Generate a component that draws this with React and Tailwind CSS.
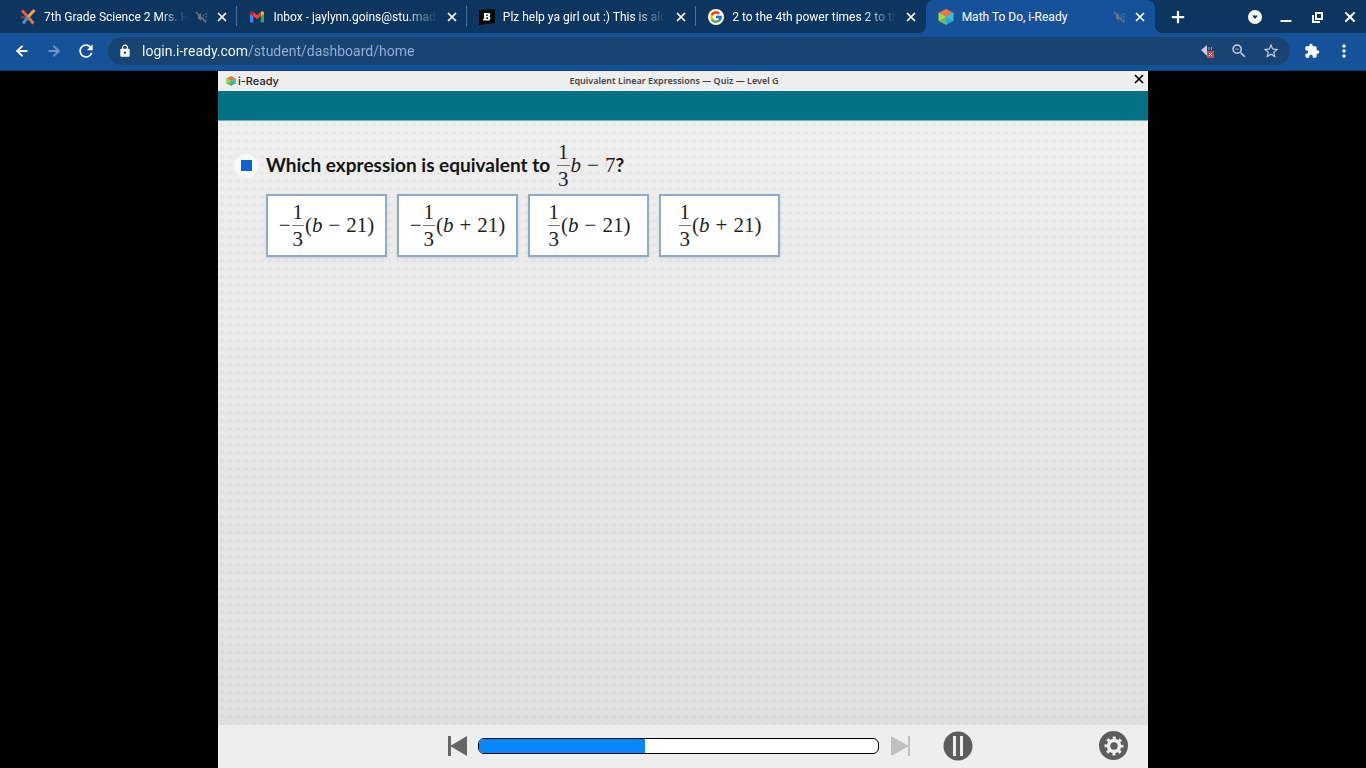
import { ArrowLeft, ArrowRight, Minus, Plus, X } from 'lucide-react'
import {
  MdExtension,
  MdLock,
  MdMoreVert,
  MdOutlineZoomOut,
  MdRefresh,
  MdSettings,
  MdStarBorder,
} from 'react-icons/md'
import { FcGoogle } from 'react-icons/fc'

const tabs = [
  { id: 'science', title: '7th Grade Science 2 Mrs. H', icon: ScienceIcon, muted: true },
  { id: 'inbox', title: 'Inbox - jaylynn.goins@stu.mad', icon: GmailIcon },
  { id: 'help', title: 'Plz help ya girl out :) This is alo', icon: BrainlyIcon },
  { id: 'search', title: '2 to the 4th power times 2 to th', icon: GoogleIcon, last: true },
  { id: 'iready', title: 'Math To Do, i-Ready', icon: CubeIcon, muted: true, active: true },
]

const choices = [
  { negative: true, operator: '−' },
  { negative: true, operator: '+' },
  { negative: false, operator: '−' },
  { negative: false, operator: '+' },
]

const progress = 41.5

function ScienceIcon() {
  return (
    <svg className="size-4" viewBox="0 0 16 16" fill="none" strokeWidth="3">
      <path d="M2 1.5 8 8" stroke="#f0563a" />
      <path d="M8 8l5.5 6.5" stroke="#e8744a" />
      <path d="M14.5 1 8 8" stroke="#f6a13a" />
      <path d="M8 8 3 14.5" stroke="#4f8fc0" />
      <path d="M1 8.5 6 8" stroke="#a03a4c" strokeWidth="2" />
    </svg>
  )
}

function GmailIcon() {
  return (
    <svg className="size-4" viewBox="0 0 16 16">
      <path d="M1 4v8.500a1 1 0 0 0 1 1h2.300V6z" fill="#4285f4" />
      <path d="M15 4v8.500a1 1 0 0 1-1 1h-2.300V6z" fill="#34a853" />
      <path d="M1 4.500V4c0-1.500 1.700-2.200 2.800-1.300L4.300 3v4.300L1 5z" fill="#c5221f" />
      <path d="M15 4.500V4c0-1.500-1.700-2.200-2.800-1.300l-.5.3v4.300L15 5z" fill="#fbbc04" />
      <path d="M4.300 3 8 5.900 11.700 3v4.300L8 10.200 4.300 7.300z" fill="#ea4335" />
    </svg>
  )
}

function BrainlyIcon() {
  return (
    <svg className="size-4" viewBox="0 0 16 16">
      <path d="M0 1 16 0v14L0 16z" fill="#000" />
      <path
        d="M5 4h4.300c1.500 0 2 .7 2 1.700 0 .9-.5 1.500-1.200 1.800.9.200 1.300.8 1.300 1.700 0 1.500-1.100 2.300-2.700 2.300H4.200V9.800h.9V5.700H5zm2.300 1.500v1.400h.9c.6 0 .9-.3.900-.8 0-.4-.3-.6-.8-.6zm0 2.700v1.700h1c.6 0 1-.3 1-.9 0-.5-.3-.8-1-.8z"
        fill="#fff"
        fillRule="evenodd"
      />
    </svg>
  )
}

function GoogleIcon() {
  return (
    <span className="grid size-4 place-items-center rounded-full bg-white">
      <FcGoogle className="size-3.5" />
    </span>
  )
}

function CubeIcon({ className = 'size-4' }) {
  return (
    <svg className={className} viewBox="0 0 16 16">
      <path d="M8 0 15.300 3.800 8 7.800.7 3.800z" fill="#f4743b" />
      <path d="M.7 3.800 8 7.800V16L.7 12z" fill="#6cc24a" />
      <path d="M15.300 3.800 8 7.800V16l7.300-4z" fill="#28a9d6" />
      <path d="M.7 3.800 8 7.800 .7 12z" fill="#a2d94a" />
      <path d="M15.300 3.800 8 7.800l7.300 4.200z" fill="#35c4cf" />
    </svg>
  )
}

function MutedIcon() {
  return (
    <svg className="size-3 text-[#6a7480]" viewBox="0 0 12 12" fill="none" stroke="currentColor">
      <path d="M3 4.500 6 2v8L3 7.500z" fill="currentColor" stroke="none" />
      <path d="M8.500 3.500v5M11 2v8" strokeDasharray="2 1" />
      <path d="M1 1l10 10.500" strokeWidth="1.500" />
    </svg>
  )
}

function BlockedSoundIcon() {
  return (
    <svg className="size-4" viewBox="0 0 16 16">
      <path d="M1 7 7 2v11z" fill="#c3cfdf" />
      <path d="M9 4v3M11.500 4v3" stroke="#8ba1bf" />
      <rect x="7" y="8" width="7" height="7" fill="#d04a4a" />
      <path d="m9 10 3 3m0-3-3 3" stroke="#fff" />
    </svg>
  )
}

function Tab({ tab }) {
  const Icon = tab.icon
  return (
    <div
      className={`relative flex h-full min-w-0 flex-1 items-center pl-3 pr-2 ${
        tab.active ? 'rounded-t-lg bg-[#15529a]' : ''
      }`}
    >
      {tab.active && (
        <>
          <span className="absolute bottom-0 -left-2 size-2 bg-[radial-gradient(circle_at_0_0,transparent_8px,#15529a_8px)]" />
          <span className="absolute -right-2 bottom-0 size-2 bg-[radial-gradient(circle_at_100%_0,transparent_8px,#15529a_8px)]" />
        </>
      )}
      <a href="#" className="flex min-w-0 flex-1 items-center gap-2">
        <span className="shrink-0">
          <Icon />
        </span>
        <span
          className={`min-w-0 flex-1 overflow-hidden text-xs whitespace-nowrap ${
            tab.active ? '' : 'mask-r-from-80%'
          }`}
        >
          {tab.title}
        </span>
      </a>
      {tab.muted && (
        <span className="ml-2 shrink-0">
          <MutedIcon />
        </span>
      )}
      <button aria-label={`Close ${tab.title}`} className="ml-2 shrink-0">
        <X className="size-3.5" strokeWidth={3} />
      </button>
      {!tab.active && !tab.last && <span className="absolute top-1.5 right-0 h-5 w-px bg-[#4c719c]" />}
    </div>
  )
}

function Fraction() {
  return (
    <span className="mx-px inline-flex flex-col items-center leading-[26px]">
      <span className="border-b border-[#777] px-px">1</span>
      <span>3</span>
    </span>
  )
}

function Choice({ negative, operator }) {
  return (
    <button className="flex h-[63px] w-[121px] items-center justify-center border-2 border-[#8eabc9] bg-white font-['Liberation_Serif',serif] text-[21px] text-[#222] shadow">
      {negative && <span>−</span>}
      <Fraction />
      <span>(</span>
      <i>b</i>
      <span className="mx-1.5">{operator}</span>
      <span>21)</span>
    </button>
  )
}

function Browser() {
  return (
    <header className="text-white">
      {/* Tab strip */}
      <div className="flex h-[33px] bg-[#0c355f] pl-2">
        <div className="flex max-w-[1147px] flex-1">
          {tabs.map((tab) => (
            <Tab key={tab.id} tab={tab} />
          ))}
        </div>
        <button aria-label="New tab" className="ml-3.5">
          <Plus className="size-[18px]" strokeWidth={3} />
        </button>
        <div className="ml-auto flex items-center gap-4 pr-2">
          <button aria-label="Search tabs">
            <svg className="size-4" viewBox="0 0 16 16">
              <circle cx="9" cy="8" r="7" fill="#fff" />
              <path d="M6 6.500h6L9 10z" fill="#0c355f" />
            </svg>
          </button>
          <button aria-label="Minimize" className="pt-2">
            <Minus className="size-4" strokeWidth={3} />
          </button>
          <button aria-label="Restore">
            <svg className="size-4" viewBox="0 0 16 16" fill="none" stroke="currentColor" strokeWidth="2">
              <path d="M6 4h6v6H6zM3 6v7h7" />
            </svg>
          </button>
          <button aria-label="Close window">
            <X className="size-4" strokeWidth={3} />
          </button>
        </div>
      </div>

      {/* Toolbar */}
      <div className="flex h-[38px] items-center border-b border-[#0f3c72] bg-[#15529a] pr-3 pb-px pl-3.5">
        <div className="flex items-center gap-4">
          <button aria-label="Back">
            <ArrowLeft className="size-4" strokeWidth={3} />
          </button>
          <button aria-label="Forward" className="text-[#7096c4]">
            <ArrowRight className="size-4" strokeWidth={3} />
          </button>
        </div>
        <button aria-label="Reload" className="ml-3.5">
          <MdRefresh className="size-5" />
        </button>
        <div className="ml-3 flex h-7 flex-1 items-center rounded-full bg-[#184474] px-2.5">
          <MdLock className="size-3.5 shrink-0" />
          <input
            type="text"
            aria-label="Address"
            defaultValue="login.i-ready.com/student/dashboard/home"
            className="ml-2.5 min-w-0 flex-1 bg-[linear-gradient(to_right,#fff_106px,#9ab3d3_106px)] bg-clip-text text-sm text-transparent outline-none"
          />
          <div className="flex items-center gap-3.5 text-[#c3cfdf]">
            <BlockedSoundIcon />
            <MdOutlineZoomOut className="size-[18px]" />
            <MdStarBorder className="size-[18px]" />
          </div>
        </div>
        <button aria-label="Extensions" className="ml-3.5">
          <MdExtension className="size-4" />
        </button>
        <button aria-label="Menu" className="ml-3.5">
          <MdMoreVert className="size-5" />
        </button>
      </div>
    </header>
  )
}

function Player() {
  return (
    <main className="mx-auto flex w-full max-w-[930px] flex-1 flex-col bg-[#eee]">
      <div className="grid h-5 grid-cols-3 items-center pr-0.5 pl-2 text-[#222]">
        <div className="flex items-center gap-0.5 font-['Inter',sans-serif] text-[11px] font-medium">
          <CubeIcon className="size-2.5" />
          <span>i-Ready</span>
        </div>
        <h1 className="pr-6 text-center font-['Noto_Sans',sans-serif] text-[9px] font-semibold whitespace-nowrap text-[#444]">
          Equivalent Linear Expressions — Quiz — Level G
        </h1>
        <button aria-label="Close lesson" className="justify-self-end pb-1 text-black">
          <X className="size-3.5" strokeWidth={3} />
        </button>
      </div>
      <div className="h-[30px] border-b border-[#6fb0b8] bg-[#037284]" />

      {/* Question */}
      <section className="flex-1 bg-[radial-gradient(circle,#0000000a_1px,transparent_2px),linear-gradient(#efefef,#e0e0e0)] bg-[size:8px_8px,100%_100%] px-4 pt-[18px]">
        <div className="flex items-center gap-2">
          <span className="grid size-6 place-items-center rounded-full bg-[#f8f8f8]">
            <span className="size-[11px] bg-[#0a63d1]" />
          </span>
          <h2 className="flex items-center font-['Lato',sans-serif] text-[19px] font-bold text-[#151515]">
            Which expression is equivalent to
            <span className="ml-1.5 flex items-center font-['Liberation_Serif',serif] text-[21px] font-normal text-[#222]">
              <Fraction />
              <i>b</i>
              <span className="mx-1.5">−</span>7
            </span>
            ?
          </h2>
        </div>
        <div className="mt-0.5 ml-8 flex flex-wrap gap-2.5">
          {choices.map((choice, idx) => (
            <Choice key={idx} {...choice} />
          ))}
        </div>
      </section>

      {/* Controls */}
      <footer className="flex h-[43px] items-center bg-[#eee] pr-5 pb-0.5 pl-[230px]">
        <button aria-label="Previous" className="text-[#666]">
          <svg className="size-5" viewBox="0 0 20 20" fill="currentColor">
            <path d="M0 0h3v20H0zM2 10 19 0v20z" />
          </svg>
        </button>
        <div
          role="progressbar"
          aria-label="Lesson progress"
          aria-valuenow={progress}
          className="ml-2.5 h-4 max-w-[401px] flex-1 overflow-hidden rounded-md border border-black bg-white"
        >
          <div className="h-full bg-[#0787fa]" style={{ width: `${progress}%` }} />
        </div>
        <button aria-label="Next" className="ml-3 text-[#c0c0c0]" disabled>
          <svg className="size-5" viewBox="0 0 20 20" fill="currentColor">
            <path d="M17 0h2v20h-2zM18 10 0 0v20z" />
          </svg>
        </button>
        <button aria-label="Pause" className="ml-8">
          <svg className="size-[30px]" viewBox="0 0 30 30">
            <circle cx="15" cy="15" r="14.500" fill="#5d5d5d" />
            <path d="M10 5h3v20h-3zM17 5h3v20h-3z" fill="#eee" />
          </svg>
        </button>
        <button
          aria-label="Settings"
          className="ml-auto grid size-[29px] place-items-center rounded-full bg-[#5d5d5d] text-[#eee]"
        >
          <svg className="size-5" viewBox="0 0 20 20" fill="none" stroke="currentColor">
            <circle cx="10" cy="10" r="5.500" strokeWidth="3.500" />
            <circle cx="10" cy="10" r="8" strokeWidth="3" strokeDasharray="3 3.283" strokeDashoffset="1.500" />
          </svg>
        </button>
      </footer>
    </main>
  )
}

function App() {
  return (
    <div className="flex min-h-screen flex-col bg-black font-['Roboto',sans-serif]">
      <Browser />
      <Player />
    </div>
  )
}

export default App
